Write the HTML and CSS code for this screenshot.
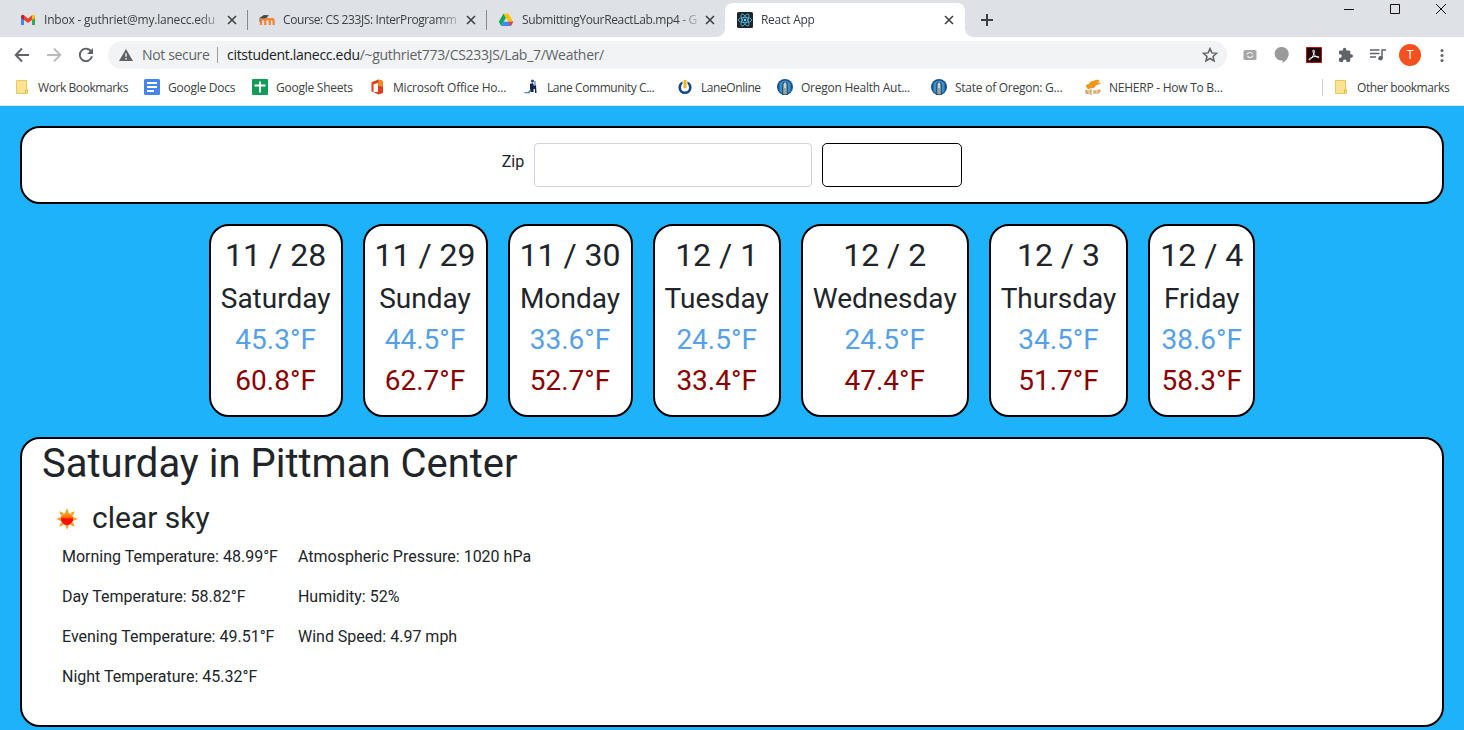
FILE: index.html
```html
<!DOCTYPE html>
<html lang="en">
<head>
<meta charset="utf-8">
<title>React App</title>
<link rel="stylesheet" href="styles.css">
</head>
<body>
<header class="browser">
  <div class="tab-strip">
    <div class="tab">
      <svg class="favicon" viewBox="0 0 16 16"><path d="M1 4v9h3V7z" fill="#4285f4"/><path d="M15 4v9h-3V7z" fill="#34a853"/><path d="M1 4.200Q2 2.200 4 3.200V8L1 5.800z" fill="#c5221f"/><path d="M4 3.300l4 3.200 4-3.200V8l-4 3.100L4 8z" fill="#ea4335"/><path d="M12 3.200Q14.500 2.200 15 4.200V6L12 8z" fill="#fbbc04"/></svg>
      <span class="tab-title t-inbox">Inbox - guthriet@my.lanecc.edu</span>
      <svg class="close" viewBox="0 0 10 10"><path d="M1 1l8 8M9 1L1 9"/></svg>
    </div>
    <div class="tab">
      <svg class="favicon" viewBox="0 0 16 16"><path d="M3 13V9q0-2 2-2t2.300 2v4M7.300 13V9q0-2 2.200-2 2.300 0 2.300 2v4M11.800 9q.4-2 2-2 1.800 0 1.800 2v4" transform="translate(-1)" fill="none" stroke="#f0883a" stroke-width="2.300"/><path d="M.3 6L5 3l5 .3-3 3-3.500.2z" fill="#484848"/><path d="M.9 6v4" stroke="#555" stroke-width=".7"/></svg>
      <span class="tab-title t-course">Course: CS 233JS: InterProgramm</span>
      <svg class="close" viewBox="0 0 10 10"><path d="M1 1l8 8M9 1L1 9"/></svg>
    </div>
    <div class="tab tab-last">
      <svg class="favicon" viewBox="0 0 16 16"><path d="M5.500 1.500L.8 9.700 3.200 14 8 5.700z" fill="#0da960"/><path d="M5.500 1.500h5L15.200 9.700h-4.900z" fill="#ffc107"/><path d="M5.600 9.700h9.600L12.800 14H3.200z" fill="#4285f4"/><path d="M10.300 9.700h4.900L12.800 14z" fill="#ea4335"/></svg>
      <span class="tab-title t-submit">SubmittingYourReactLab.mp4 - G</span>
      <svg class="close" viewBox="0 0 10 10"><path d="M1 1l8 8M9 1L1 9"/></svg>
    </div>
    <div class="tab active">
      <svg class="favicon" viewBox="0 0 16 16"><rect width="16" height="16" rx="1.500" fill="#20232a"/><g fill="none" stroke="#56bfdc" stroke-width=".8"><ellipse cx="8" cy="8" rx="6.700" ry="2.600"/><ellipse cx="8" cy="8" rx="6.700" ry="2.600" transform="rotate(60 8 8)"/><ellipse cx="8" cy="8" rx="6.700" ry="2.600" transform="rotate(120 8 8)"/></g><circle cx="8" cy="8" r="1.300" fill="#61dafb"/></svg>
      <span class="tab-title t-react">React App</span>
      <svg class="close" viewBox="0 0 10 10"><path d="M1 1l8 8M9 1L1 9"/></svg>
    </div>
    <svg class="new-tab" viewBox="0 0 12 12"><path d="M6 0v12M0 6h12"/></svg>
    <div class="window-controls">
      <svg viewBox="0 0 10 10"><path d="M0 5.500h10"/></svg>
      <svg viewBox="0 0 10 10"><path d="M.5.500h9v9h-9z"/></svg>
      <svg viewBox="0 0 10 10"><path d="M0 0l10 10M10 0L0 10"/></svg>
    </div>
  </div>

  <div class="toolbar">
    <svg class="nav" viewBox="0 0 16 16"><path d="M15 8H2M8 1.500L1.700 8 8 14.500"/></svg>
    <svg class="nav disabled" viewBox="0 0 16 16"><path d="M1 8h13M8 1.500L14.300 8 8 14.500"/></svg>
    <svg class="nav" viewBox="0 0 16 16"><path d="M13.300 4.700A6.200 6.200 0 1 0 14 9.300"/><path d="M15 1v6H9z" fill="#5f6368" stroke="none"/></svg>
    <div class="address">
      <svg class="warning" viewBox="0 0 14 12"><path d="M7 0l7 12H0z" fill="#5f6368"/><path d="M7 4.300v3.500M7 9v1.500" stroke="#f1f3f4" stroke-width="1.400"/></svg>
      <span class="not-secure">Not secure</span>
      <span class="url"><span class="host">citstudent.lanecc.edu</span>/~guthriet773/CS233JS/Lab_7/Weather/</span>
      <svg class="star" viewBox="0 0 16 16"><path d="M8 1.600l1.900 4.300 4.700.4-3.600 3.100 1.100 4.600L8 11.500 3.900 14 5 9.400 1.400 6.300l4.700-.4z" fill="none" stroke="#5f6368" stroke-width="1.500"/></svg>
    </div>
    <div class="extensions">
      <svg viewBox="0 0 16 16"><rect x="1.500" y="3" width="13" height="10" rx="1.500" fill="#a5a7a9"/><path d="M5 7.500q1-2 3-2 1.600 0 2.600 1.300M11 8.500q-1 2-3 2-1.600 0-2.600-1.300" fill="none" stroke="#f3f3f3" stroke-width="1.200"/></svg>
      <svg viewBox="0 0 16 16"><path d="M8 0a6.800 6.800 0 1 0 .5 13.500V16Q14.800 12 14.800 6.800A6.800 6.800 0 0 0 8 0z" fill="#9a9a9a"/></svg>
      <svg viewBox="0 0 16 16"><path d="M.5.500h15v15H.5z" fill="#210808" stroke="#b3160f"/><path d="M7.300 3c1.500-.5 1.300 2.500-.2 5.500-1 2-2.800 4.500-3.800 4.400-1.300-.2.700-2.400 4.700-3.200 3-.6 5.300-.2 5 .7-.4 1.200-3.600-.8-4.800-2.800C7 5.500 6.500 3.300 7.300 3z" fill="none" stroke="#fff"/></svg>
      <svg viewBox="0 0 16 16"><path d="M13.300 7.300h-1V4.700c0-.7-.6-1.300-1.300-1.300H8.300v-1a1.700 1.700 0 0 0-3.400 0v1H2.400C1.700 3.400 1 4 1 4.700v2.600h1a1.800 1.800 0 0 1 0 3.600H1v2.600c0 .8.600 1.400 1.400 1.400H5v-1a1.800 1.800 0 0 1 3.500 0v1H11c.700 0 1.300-.6 1.300-1.400v-2.800h1a1.700 1.700 0 0 0 0-3.400z" fill="#5f6368"/></svg>
      <svg viewBox="0 0 16 16"><path d="M0 3h9.500M0 6.500h9.500M0 10h6M12 11V3h4" fill="none" stroke="#5f6368" stroke-width="1.500"/><circle cx="10.500" cy="11.300" r="2.200" fill="#5f6368"/></svg>
    </div>
    <span class="avatar">T</span>
    <svg class="menu" viewBox="0 0 4 16"><circle cx="2" cy="3.500" r="1.500"/><circle cx="2" cy="8.500" r="1.500"/><circle cx="2" cy="13.500" r="1.500"/></svg>
  </div>

  <nav class="bookmarks">
    <a><svg viewBox="0 0 16 16"><path d="M2.500 1.500h10v9h1v4h-11z" fill="#fde293" stroke="#e8c860"/><path d="M11.500 14v-3h2" fill="none" stroke="#dfb947"/></svg><span class="tight">Work Bookmarks</span></a>
    <a><svg viewBox="0 0 16 16"><rect width="16" height="16" rx="1.500" fill="#4684ee"/><path d="M3 4h10M3 8h10M3 12h7" stroke="#fff" stroke-width="1.800"/></svg><span>Google Docs</span></a>
    <a><svg viewBox="0 0 16 16"><rect width="16" height="16" rx="1" fill="#109d58"/><path d="M8 2.500v11M2.500 6.500h11" stroke="#fff" stroke-width="2"/></svg><span>Google Sheets</span></a>
    <a><svg viewBox="0 0 16 16"><path d="M9.500.500L2.500 3.200v9.300l2 .8V5.200l4.500-1.300v8.900l-4.500.5 5 2.200 4.500-1.500V2z" fill="#dc3e1b"/><path d="M9.500.500L14 2v6L9 6.500z" fill="#f28b24"/></svg><span class="loose">Microsoft Office Ho...</span></a>
    <a class="lane"><svg viewBox="0 0 16 16"><circle cx="8.500" cy="2" r="1.600" fill="#234e91"/><path d="M6 5l3-1 1 3 2-1 .5 8H11v-4H9.500v3h-3l-.5-4z" fill="#102547"/><path d="M0 13h4l2-2v3.300H1z" fill="#4b81bc"/><path d="M11 2v5" stroke="#37669d"/></svg><span class="tight">Lane Community C...</span></a>
    <a><svg viewBox="0 0 16 16"><circle cx="8" cy="8.500" r="5.300" fill="#fff" stroke="#164a87" stroke-width="2.600"/><path d="M8 1.500v7" stroke="#fff" stroke-width="5"/><path d="M8 1v8" stroke="#f2b41d" stroke-width="3"/></svg><span class="tight">LaneOnline</span></a>
    <a><svg viewBox="0 0 16 16"><circle cx="8" cy="8" r="8" fill="#14508f"/><path d="M2.500 4q5.500-5 11 0v8.500q-5.500 4-11 0z" fill="#3b8fc6"/><path d="M5 16V6l1-3h4l1 3v10z" fill="#2b5578"/><path d="M6.500 15V5L8 3l1.500 2v10z" fill="#c4d3cb"/><path d="M8 9v7" stroke="#69777b"/></svg><span>Oregon Health Aut...</span></a>
    <a><svg viewBox="0 0 16 16"><circle cx="8" cy="8" r="8" fill="#14508f"/><path d="M2.500 4q5.500-5 11 0v8.500q-5.500 4-11 0z" fill="#3b8fc6"/><path d="M5 16V6l1-3h4l1 3v10z" fill="#2b5578"/><path d="M6.500 15V5L8 3l1.500 2v10z" fill="#c4d3cb"/><path d="M8 9v7" stroke="#69777b"/></svg><span>State of Oregon: G...</span></a>
    <a><svg viewBox="0 0 16 16"><path d="M1 7q0-2 3-2 1-3 4-3 4-2 6-1l1 1.500-3 .8 4 .7-2 1.500-3 .5-1 2q-2 2-4 1-4 3-5-2z" fill="#ee961e"/><path d="M1 11v4M3 11v4M1 11l2 4M5 11h2M5 13h2M5 15h2M5 11v4M9 11v4M11 11v4M9 13h2M13 15v-4h2v2h-2" fill="none" stroke="#cb813b" stroke-width=".9"/></svg><span>NEHERP - How To B...</span></a>
    <a class="other"><svg viewBox="0 0 16 16"><path d="M2.500 1.500h10v9h1v4h-11z" fill="#fde293" stroke="#e8c860"/><path d="M11.500 14v-3h2" fill="none" stroke="#dfb947"/></svg><span class="tight">Other bookmarks</span></a>
  </nav>
</header>

<main class="app">
  <form class="panel zip-form">
    <label for="zip">Zip</label>
    <input id="zip" class="zip-input" type="text">
    <button class="zip-button" type="button" aria-label="Submit"></button>
  </form>
  <section class="days">
    <article class="panel day"><h2>11 / 28</h2><h3>Saturday</h3><h3 class="low">45.3°F</h3><h3 class="high">60.8°F</h3></article>
    <article class="panel day"><h2>11 / 29</h2><h3>Sunday</h3><h3 class="low">44.5°F</h3><h3 class="high">62.7°F</h3></article>
    <article class="panel day"><h2>11 / 30</h2><h3>Monday</h3><h3 class="low">33.6°F</h3><h3 class="high">52.7°F</h3></article>
    <article class="panel day"><h2>12 / 1</h2><h3>Tuesday</h3><h3 class="low">24.5°F</h3><h3 class="high">33.4°F</h3></article>
    <article class="panel day"><h2>12 / 2</h2><h3>Wednesday</h3><h3 class="low">24.5°F</h3><h3 class="high">47.4°F</h3></article>
    <article class="panel day"><h2>12 / 3</h2><h3>Thursday</h3><h3 class="low">34.5°F</h3><h3 class="high">51.7°F</h3></article>
    <article class="panel day"><h2>12 / 4</h2><h3>Friday</h3><h3 class="low">38.6°F</h3><h3 class="high">58.3°F</h3></article>
  </section>
  <section class="panel detail">
    <h1>Saturday in Pittman Center</h1>
    <div class="condition">
      <svg class="sun" viewBox="0 0 22 22"><defs><linearGradient id="sunFill" x2="0" y2="1"><stop offset="0" stop-color="#ff9d19"/><stop offset=".35" stop-color="#ff7a08"/><stop offset=".5" stop-color="#f80a00"/><stop offset="1" stop-color="#ff1a00"/></linearGradient></defs><path d="M11 0l1.900 5h-3.800zM11 22l1.900-5h-3.800zM0 11l5-1.900v3.800zM22 11l-5-1.900v3.800zM3.200 3.200l4.700 1.900-2.800 2.800zM18.800 3.200l-4.700 1.900 2.800 2.800zM3.200 18.800l4.700-1.900-2.800-2.800zM18.800 18.800l-4.700-1.900 2.800-2.800z" fill="#f5a52b"/><circle cx="11" cy="11" r="6.200" fill="url(#sunFill)"/></svg>
      <h2>clear sky</h2>
    </div>
    <div class="stats">
      <div class="stat-column"><p>Morning Temperature: 48.99°F</p><p>Day Temperature: 58.82°F</p><p>Evening Temperature: 49.51°F</p><p>Night Temperature: 45.32°F</p></div>
      <div class="stat-column"><p>Atmospheric Pressure: 1020 hPa</p><p>Humidity: 52%</p><p>Wind Speed: 4.97 mph</p></div>
    </div>
  </section>
</main>
</body>
</html>
```
FILE: styles.css
```css
* { box-sizing: border-box; }
body {
  margin: 0;
  height: 730px;
  overflow: hidden;
  background: #1eb2fa;
  color: #212529;
  font: 16px/24px Roboto, sans-serif;
}
h1, h2, h3, p { margin: 0; font-weight: 400; }
svg { display: block; flex: none; }

.browser {
  height: 106px;
  background: #fff;
  border-bottom: 1px solid #d5e5ee;
  font: 12px/16px "Open Sans", sans-serif;
  color: #3c4043;
}
.tab-strip {
  display: flex;
  height: 37px;
  padding: 3px 0 0 8px;
  background: #dee1e6;
}
.tab {
  position: relative;
  display: flex;
  align-items: center;
  width: 239px;
  padding: 0 10px 0 12px;
}
.tab:not(.active):not(.tab-last)::after {
  content: "";
  position: absolute;
  right: -1px;
  top: 7px;
  width: 1px;
  height: 20px;
  background: #86898d;
}
.tab.active {
  width: 240px;
  margin-right: 16px;
  background: #fff;
  border-radius: 8px 8px 0 0;
}
.tab.active::before,
.tab.active::after {
  content: "";
  position: absolute;
  bottom: 0;
  width: 8px;
  height: 8px;
}
.tab.active::before { left: -8px; background: radial-gradient(circle at 0 0, #dee1e6 7.5px, #fff 8px); }
.tab.active::after { right: -8px; background: radial-gradient(circle at 100% 0, #dee1e6 7.5px, #fff 8px); }
.favicon { width: 16px; height: 16px; margin-right: 8px; }
.tab-title {
  width: 176px;
  white-space: nowrap;
  letter-spacing: -0.2px;
  -webkit-mask-image: linear-gradient(90deg, #000 155px, rgba(0, 0, 0, .2) 176px);
}
.t-course { letter-spacing: -0.4px; }
.t-submit { letter-spacing: -0.35px; }
.t-react { letter-spacing: -0.3px; }
.close { width: 10px; height: 10px; margin-left: 7px; fill: none; stroke: #3c4043; stroke-width: 1.600; }
.new-tab { width: 12px; height: 12px; margin-top: 11px; fill: none; stroke: #3c4043; stroke-width: 2; }
.window-controls { display: flex; gap: 36px; margin: 1px 18px 0 auto; }
.window-controls svg { width: 10px; height: 10px; overflow: visible; fill: none; stroke: #111; }

.toolbar {
  display: flex;
  align-items: center;
  height: 36px;
  padding: 0 20px 0 14px;
}
.nav { width: 16px; height: 16px; margin-right: 16px; fill: none; stroke: #5f6368; stroke-width: 1.900; }
.nav.disabled { stroke: #babcbe; }
.nav:nth-child(3) { margin-right: 14px; }
.address {
  display: flex;
  align-items: center;
  flex: none;
  width: 1119px;
  height: 28px;
  padding: 0 9px 0 11px;
  border-radius: 14px;
  background: #f1f3f4;
  font-size: 14px;
  color: #5f6368;
}
.warning { width: 14px; height: 12px; }
.not-secure {
  width: 76px;
  margin: 0 9px;
  border-right: 1px solid #9b9ea2;
  letter-spacing: -0.35px;
  line-height: 16px;
}
.url { letter-spacing: -0.3px; }
.host { color: #202124; }
.star { width: 16px; height: 16px; margin-left: auto; }
.extensions { display: flex; gap: 16px; margin-left: 15px; }
.extensions svg { width: 16px; height: 16px; }
.avatar {
  width: 22px;
  height: 22px;
  margin-left: 13px;
  border-radius: 50%;
  background: #f4511e;
  color: #fff;
  font: 12px/22px Roboto, sans-serif;
  text-align: center;
}
.menu { width: 4px; height: 16px; margin-left: auto; fill: #5f6368; }

.bookmarks {
  display: grid;
  grid-template-columns: 130px 108px 117px 155px 153px 100px 154px 154px 237px 1fr;
  align-items: center;
  height: 28px;
  padding-left: 14px;
}
.bookmarks a { display: flex; align-items: center; gap: 8px; white-space: nowrap; letter-spacing: -0.25px; }
.bookmarks a svg { width: 16px; height: 16px; }
.bookmarks span { padding-top: 1px; }
.bookmarks .tight { letter-spacing: -0.42px; }
.bookmarks .loose { letter-spacing: -0.2px; }
.bookmarks .lane { gap: 7px; }
.bookmarks .other { padding-left: 10px; border-left: 1px solid #cdd0d4; }

.app {
  display: flex;
  flex-direction: column;
  gap: 20px;
  padding: 20px 20px 0;
}
.panel { background: #fff; border: 2px solid #000; border-radius: 20px; }
.zip-form {
  display: flex;
  justify-content: center;
  gap: 10px;
  height: 78px;
  padding-top: 15px;
}
.zip-form label { margin-top: 7px; }
.zip-input { width: 278px; height: 44px; border: 1px solid #ced4da; border-radius: 4px; }
.zip-button { width: 140px; height: 44px; border: 1px solid #000; border-radius: 5px; background: #fff; }
.days { display: flex; justify-content: center; gap: 20px; }
.day { height: 193px; padding: 10px; text-align: center; }
.day h2 { margin-bottom: 8px; font-size: 32px; line-height: 38px; }
.day h3 { margin-bottom: 8px; font-size: 28px; line-height: 33px; }
.day .low { color: #56a0e8; }
.day .high { color: #8b0000; }
.detail { height: 290px; padding: 1px 20px 0; }
.detail h1 { font-size: 40px; line-height: 48px; }
.condition { display: flex; align-items: center; gap: 14px; height: 38px; margin: 11px 0 0 14px; }
.condition h2 { font-size: 30px; line-height: 38px; }
.sun { width: 22px; height: 22px; margin-top: 2px; }
.stats { display: flex; gap: 20px; padding: 8px 20px 0; }
.stat-column { display: flex; flex-direction: column; gap: 16px; }
```
